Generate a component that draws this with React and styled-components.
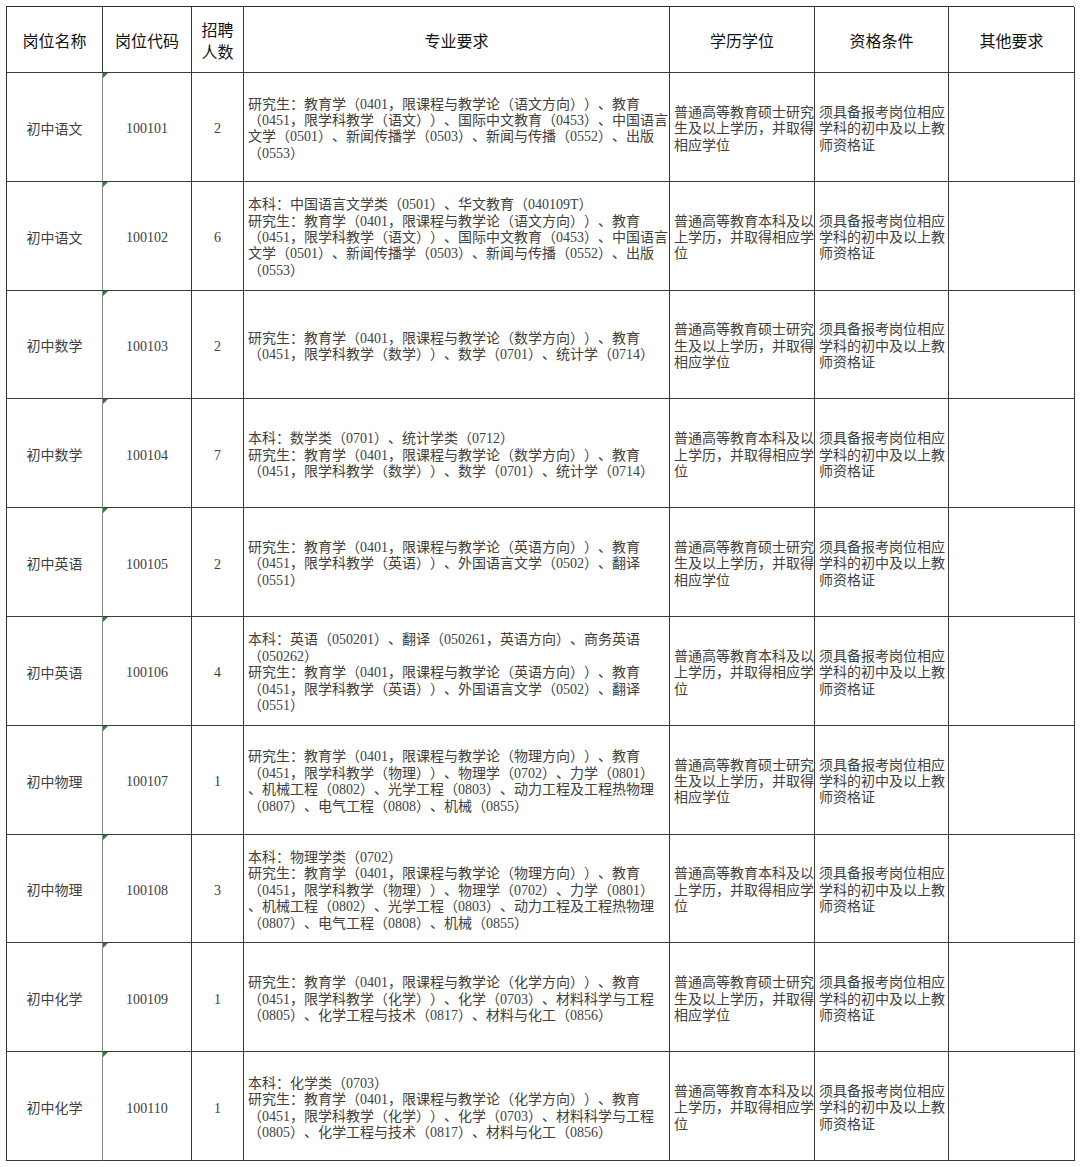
import React from "react";
import styled, { createGlobalStyle } from "styled-components";

const GlobalStyle = createGlobalStyle`
  html, body {
    margin: 0;
    padding: 0;
    background: #ffffff;
  }
  * {
    text-spacing-trim: space-all;
  }
`;

const MASTER = ["普通高等教育硕士研究", "生及以上学历，并取得", "相应学位"];
const BACHELOR = ["普通高等教育本科及以", "上学历，并取得相应学", "位"];
const QUAL = ["须具备报考岗位相应", "学科的初中及以上教", "师资格证"];

const rows = [
  {
    name: "初中语文",
    code: "100101",
    count: "2",
    major: [
      "研究生：教育学（0401，限课程与教学论（语文方向））、教育",
      "（0451，限学科教学（语文））、国际中文教育（0453）、中国语言",
      "文学（0501）、新闻传播学（0503）、新闻与传播（0552）、出版",
      "（0553）",
    ],
    edu: MASTER,
  },
  {
    name: "初中语文",
    code: "100102",
    count: "6",
    major: [
      "本科：中国语言文学类（0501）、华文教育（040109T）",
      "研究生：教育学（0401，限课程与教学论（语文方向））、教育",
      "（0451，限学科教学（语文））、国际中文教育（0453）、中国语言",
      "文学（0501）、新闻传播学（0503）、新闻与传播（0552）、出版",
      "（0553）",
    ],
    edu: BACHELOR,
  },
  {
    name: "初中数学",
    code: "100103",
    count: "2",
    major: [
      "研究生：教育学（0401，限课程与教学论（数学方向））、教育",
      "（0451，限学科教学（数学））、数学（0701）、统计学（0714）",
    ],
    edu: MASTER,
  },
  {
    name: "初中数学",
    code: "100104",
    count: "7",
    major: [
      "本科：数学类（0701）、统计学类（0712）",
      "研究生：教育学（0401，限课程与教学论（数学方向））、教育",
      "（0451，限学科教学（数学））、数学（0701）、统计学（0714）",
    ],
    edu: BACHELOR,
  },
  {
    name: "初中英语",
    code: "100105",
    count: "2",
    major: [
      "研究生：教育学（0401，限课程与教学论（英语方向））、教育",
      "（0451，限学科教学（英语））、外国语言文学（0502）、翻译",
      "（0551）",
    ],
    edu: MASTER,
  },
  {
    name: "初中英语",
    code: "100106",
    count: "4",
    major: [
      "本科：英语（050201）、翻译（050261，英语方向）、商务英语",
      "（050262）",
      "研究生：教育学（0401，限课程与教学论（英语方向））、教育",
      "（0451，限学科教学（英语））、外国语言文学（0502）、翻译",
      "（0551）",
    ],
    edu: BACHELOR,
  },
  {
    name: "初中物理",
    code: "100107",
    count: "1",
    major: [
      "研究生：教育学（0401，限课程与教学论（物理方向））、教育",
      "（0451，限学科教学（物理））、物理学（0702）、力学（0801）",
      "、机械工程（0802）、光学工程（0803）、动力工程及工程热物理",
      "（0807）、电气工程（0808）、机械（0855）",
    ],
    edu: MASTER,
  },
  {
    name: "初中物理",
    code: "100108",
    count: "3",
    major: [
      "本科：物理学类（0702）",
      "研究生：教育学（0401，限课程与教学论（物理方向））、教育",
      "（0451，限学科教学（物理））、物理学（0702）、力学（0801）",
      "、机械工程（0802）、光学工程（0803）、动力工程及工程热物理",
      "（0807）、电气工程（0808）、机械（0855）",
    ],
    edu: BACHELOR,
  },
  {
    name: "初中化学",
    code: "100109",
    count: "1",
    major: [
      "研究生：教育学（0401，限课程与教学论（化学方向））、教育",
      "（0451，限学科教学（化学））、化学（0703）、材料科学与工程",
      "（0805）、化学工程与技术（0817）、材料与化工（0856）",
    ],
    edu: MASTER,
  },
  {
    name: "初中化学",
    code: "100110",
    count: "1",
    major: [
      "本科：化学类（0703）",
      "研究生：教育学（0401，限课程与教学论（化学方向））、教育",
      "（0451，限学科教学（化学））、化学（0703）、材料科学与工程",
      "（0805）、化学工程与技术（0817）、材料与化工（0856）",
    ],
    edu: BACHELOR,
  },
];

function App() {
  return (
    <>
      <GlobalStyle />
      <Page>
        <Sheet>
          <HeadCell>岗位名称</HeadCell>
          <HeadCell>岗位代码</HeadCell>
          <HeadCell $tight>
            招聘
            <br />
            人数
          </HeadCell>
          <HeadCell>专业要求</HeadCell>
          <HeadCell>学历学位</HeadCell>
          <HeadCell>资格条件</HeadCell>
          <HeadCell>其他要求</HeadCell>

          {rows.map((r) => (
            <React.Fragment key={r.code}>
              <CenterCell $shift={2}>{r.name}</CenterCell>
              <CenterCell $shift={5} $marked>
                {r.code}
              </CenterCell>
              <CenterCell $shift={5}>{r.count}</CenterCell>
              <TextCell>
                {r.major.map((line, i) => (
                  <Line key={i}>{line}</Line>
                ))}
              </TextCell>
              <TextCell>
                {r.edu.map((line, i) => (
                  <Line key={i}>{line}</Line>
                ))}
              </TextCell>
              <TextCell>
                {QUAL.map((line, i) => (
                  <Line key={i}>{line}</Line>
                ))}
              </TextCell>
              <TextCell />
            </React.Fragment>
          ))}
        </Sheet>
      </Page>
    </>
  );
}

export default App;

const Page = styled.div`
  padding: 6px 6px 7px 6px;
  background: #fff;
`;

const Sheet = styled.div`
  display: grid;
  grid-template-columns: 96px 89px 52px 426px 145px 134px 126px;
  grid-template-rows: 66px repeat(10, 108.8px);
  width: 1068px;
  border-top: 1px solid #2e2e2e;
  border-left: 1px solid #2e2e2e;
  box-sizing: border-box;
`;

const Cell = styled.div`
  position: relative;
  box-sizing: border-box;
  border-right: 1px solid #3a3a3a;
  border-bottom: 1px solid #3a3a3a;
  display: flex;
  align-items: center;
  overflow: hidden;
`;

const HeadCell = styled(Cell)`
  justify-content: center;
  text-align: center;
  font-family: "Noto Sans CJK SC", "Liberation Sans", sans-serif;
  font-size: 16px;
  line-height: ${(p) => (p.$tight ? "22px" : "20px")};
  color: #111;
`;

const CenterCell = styled(Cell)`
  justify-content: center;
  padding-top: ${(p) => p.$shift || 0}px;
  font-family: "Liberation Serif", "Noto Sans CJK SC", serif;
  font-size: 14px;
  color: #404040;

  ${(p) =>
    p.$marked &&
    `
    border-left: 1px solid #8a8a8a;
    margin-left: -1px;
    &::before {
      content: "";
      position: absolute;
      top: 0;
      left: 0;
      width: 0;
      height: 0;
      border-top: 5px solid #1f8a1f;
      border-right: 5px solid transparent;
    }
  `}
`;

const TextCell = styled(Cell)`
  flex-direction: column;
  align-items: stretch;
  justify-content: center;
  padding: 5px 2px 0 4px;
  font-family: "Liberation Serif", "Noto Sans CJK SC", serif;
  font-size: 14px;
  line-height: 16.4px;
  color: #404040;
`;

const Line = styled.div`
  white-space: nowrap;
`;
